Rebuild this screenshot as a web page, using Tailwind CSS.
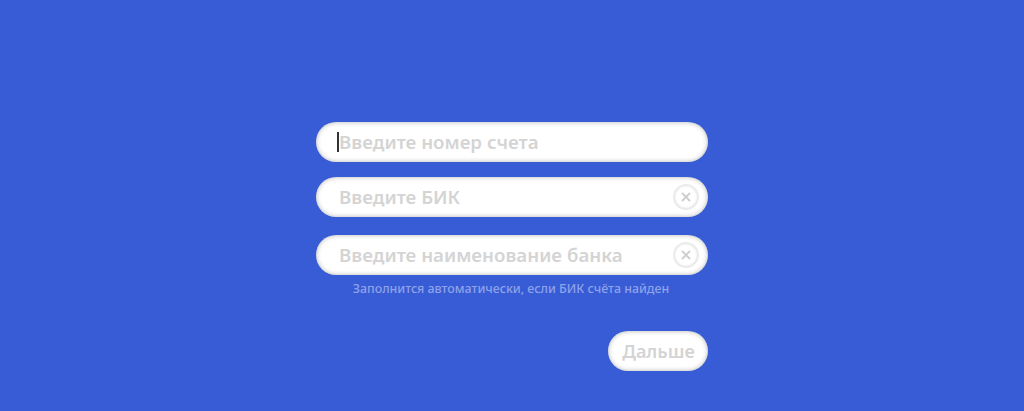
<!DOCTYPE html>
<html lang="ru">
<head>
    <meta charset="UTF-8">
    <title>Реквизиты</title>
    <script src="https://cdn.jsdelivr.net/npm/@tailwindcss/browser@4"></script>
</head>
<body class="bg-[#385cd5] h-[411px] overflow-hidden font-['Noto_Sans',sans-serif]">
    <div class="w-[392px] ml-[316px] pt-[122px] flex flex-col">
        <!-- account number -->
        <div class="h-10 rounded-[20px] bg-white shadow-[inset_0_0_5px_rgba(0,0,0,0.3)] flex items-center pl-[21px] pr-[9px]">
            <span class="w-[1.5px] h-5 bg-[#333] -mr-[1.5px]"></span>
            <span class="pl-[2px] text-[18.7px] font-semibold text-[#d4d4d4]">Введите номер счета</span>
        </div>

        <!-- bik -->
        <div class="mt-[15px] h-10 rounded-[20px] bg-white shadow-[inset_0_0_5px_rgba(0,0,0,0.3)] flex items-center justify-between pl-[23px] pr-[9px]">
            <span class="text-[18.7px] font-semibold text-[#d4d4d4]">Введите БИК</span>
            <span class="w-[26px] h-[26px] rounded-full border-2 border-[#ebebeb] shadow-[inset_0_0_2px_rgba(0,0,0,0.12)] flex items-center justify-center">
                <svg width="10" height="10" viewBox="0 0 10 10" fill="none" stroke="#cdcdcd" stroke-width="1.8"><path d="M1 1l8 8M9 1l-8 8"/></svg>
            </span>
        </div>

        <!-- bank name -->
        <div class="mt-[18px] h-10 rounded-[20px] bg-white shadow-[inset_0_0_5px_rgba(0,0,0,0.3)] flex items-center justify-between pl-[23px] pr-[9px]">
            <span class="text-[18.7px] font-semibold text-[#d4d4d4]">Введите наименование банка</span>
            <span class="w-[26px] h-[26px] rounded-full border-2 border-[#ebebeb] shadow-[inset_0_0_2px_rgba(0,0,0,0.12)] flex items-center justify-center">
                <svg width="10" height="10" viewBox="0 0 10 10" fill="none" stroke="#cdcdcd" stroke-width="1.8"><path d="M1 1l8 8M9 1l-8 8"/></svg>
            </span>
        </div>
        <p class="mt-[6px] pr-[2px] text-center text-[12.4px] leading-[16px] font-medium text-[#8ea2ea]">Заполнится автоматически, если БИК счёта найден</p>

        <div class="mt-[34px] flex justify-end">
            <button class="w-[100px] h-10 pl-px rounded-[20px] bg-white shadow-[inset_0_0_5px_rgba(0,0,0,0.3)] text-[18px] font-semibold text-[#d4d4d4]">Дальше</button>
        </div>
    </div>
</body>
</html>
